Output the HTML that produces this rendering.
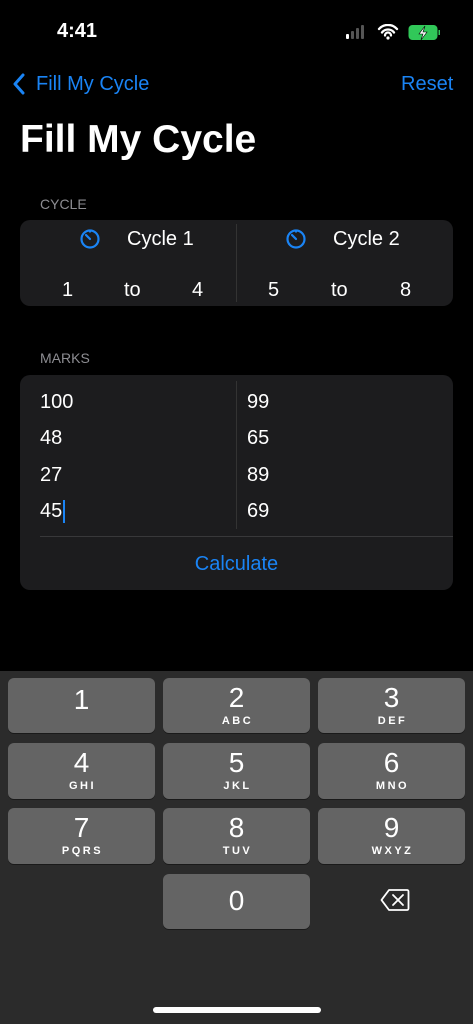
<!DOCTYPE html>
<html><head><meta charset="utf-8"><style>
*{margin:0;padding:0;box-sizing:border-box}
body{width:473px;height:1024px;background:#000;font-family:"Liberation Sans",sans-serif;color:#fff;position:relative;overflow:hidden}
.a{position:absolute;white-space:nowrap}
.blue{color:#1a84f5}
.card{position:absolute;left:20px;width:433px;background:#1c1c1e;border-radius:10px}
.t{font-size:20px;line-height:20px;transform:translateY(-50%)}
.key{position:absolute;width:147px;background:#646464;border-radius:6px;text-align:center;box-shadow:0 1px 0 #1a1a1a}
.key .n{font-size:28px;line-height:28px;display:block;margin-top:6px}
.key .l{font-size:11px;font-weight:bold;letter-spacing:2.5px;display:block;margin-top:3px;padding-left:2px}
.lab{font-size:14px;color:#8d8d92}
</style></head><body>
<div class="a" style="left:57px;top:20px;font-size:20px;font-weight:bold">4:41</div>
<svg class="a" style="left:345px;top:24px" width="95" height="18" viewBox="0 0 95 18">
<rect x="1" y="10" width="3" height="5" rx="1" fill="#fff"/><rect x="6" y="7" width="3" height="8" rx="1" fill="#555"/><rect x="11" y="4" width="3" height="11" rx="1" fill="#555"/><rect x="16" y="1" width="3" height="14" rx="1" fill="#555"/>
<path d="M34 5a12 12 0 0 1 18 0M37 8.5a7.5 7.5 0 0 1 12 0M40 11.5a3 3 0 0 1 6 0" stroke="#fff" stroke-width="2.3" fill="none" stroke-linecap="round"/><circle cx="43" cy="14" r="1.6" fill="#fff"/>
<rect x="64" y="1.5" width="28" height="14" rx="3.5" fill="#31c859" stroke="#31c859"/><rect x="93.5" y="6" width="1.5" height="5" fill="#31c859"/>
<path d="M80 2l-6 8h4l-2 6 6-8h-4z" fill="#fff" stroke="#000" stroke-width=".6"/>
</svg>
<svg class="a" style="left:12px;top:73px" width="14" height="22" viewBox="0 0 14 22"><path d="M11 2L3 11l8 9" stroke="#1a84f5" stroke-width="3" fill="none" stroke-linecap="round" stroke-linejoin="round"/></svg>
<div class="a blue" style="left:36px;top:73px;font-size:20px">Fill My Cycle</div>
<div class="a blue" style="left:401px;top:73px;font-size:20px">Reset</div>
<div class="a" style="left:20px;top:118px;font-size:39px;font-weight:bold">Fill My Cycle</div>
<div class="a lab" style="left:40px;top:196px">CYCLE</div>
<div class="card" style="top:220px;height:86px">
<div class="a" style="left:216px;top:4px;width:1px;height:78px;background:#333"></div>
</div>
<svg class="a" style="left:79px;top:227px" width="22" height="22" viewBox="0 0 22 22"><circle cx="11" cy="12" r="8.5" stroke="#1a84f5" stroke-width="2.2" fill="none"/><path d="M11 12L7 8" stroke="#1a84f5" stroke-width="2.2" stroke-linecap="round"/><path d="M11 3.5v2" stroke="#1a84f5" stroke-width="2"/></svg>
<svg class="a" style="left:285px;top:227px" width="22" height="22" viewBox="0 0 22 22"><circle cx="11" cy="12" r="8.5" stroke="#1a84f5" stroke-width="2.2" fill="none"/><path d="M11 12L7 8" stroke="#1a84f5" stroke-width="2.2" stroke-linecap="round"/><path d="M11 3.5v2" stroke="#1a84f5" stroke-width="2"/></svg>
<div class="a t" style="left:127px;top:239px">Cycle 1</div>
<div class="a t" style="left:333px;top:239px">Cycle 2</div>
<div class="a t" style="left:62px;top:290px">1</div>
<div class="a t" style="left:124px;top:290px">to</div>
<div class="a t" style="left:192px;top:290px">4</div>
<div class="a t" style="left:268px;top:290px">5</div>
<div class="a t" style="left:331px;top:290px">to</div>
<div class="a t" style="left:400px;top:290px">8</div>
<div class="a lab" style="left:40px;top:350px">MARKS</div>
<div class="card" style="top:375px;height:215px">
<div class="a" style="left:216px;top:6px;width:1px;height:148px;background:#333"></div>
<div class="a" style="left:20px;top:161px;width:413px;height:1px;background:#38383a"></div>
</div>
<div class="a t" style="left:40px;top:402px">100</div>
<div class="a t" style="left:40px;top:438px">48</div>
<div class="a t" style="left:40px;top:475px">27</div>
<div class="a t" style="left:40px;top:511px">45</div>
<div class="a" style="left:63px;top:500px;width:2px;height:23px;background:#1a84f5"></div>
<div class="a t" style="left:247px;top:402px">99</div>
<div class="a t" style="left:247px;top:438px">65</div>
<div class="a t" style="left:247px;top:475px">89</div>
<div class="a t" style="left:247px;top:511px">69</div>
<div class="a t blue" style="left:0;width:473px;text-align:center;top:564px">Calculate</div>
<div class="a" style="left:0;top:671px;width:473px;height:353px;background:#2b2b2b"></div>
<div class="key" style="left:8px;top:678px;height:55px"><span class="n" style="margin-top:8px">1</span></div>
<div class="key" style="left:163px;top:678px;height:55px"><span class="n">2</span><span class="l">ABC</span></div>
<div class="key" style="left:318px;top:678px;height:55px"><span class="n">3</span><span class="l">DEF</span></div>
<div class="key" style="left:8px;top:743px;height:56px"><span class="n">4</span><span class="l">GHI</span></div>
<div class="key" style="left:163px;top:743px;height:56px"><span class="n">5</span><span class="l">JKL</span></div>
<div class="key" style="left:318px;top:743px;height:56px"><span class="n">6</span><span class="l">MNO</span></div>
<div class="key" style="left:8px;top:808px;height:56px"><span class="n">7</span><span class="l">PQRS</span></div>
<div class="key" style="left:163px;top:808px;height:56px"><span class="n">8</span><span class="l">TUV</span></div>
<div class="key" style="left:318px;top:808px;height:56px"><span class="n">9</span><span class="l">WXYZ</span></div>
<div class="key" style="left:163px;top:874px;height:55px"><span class="n" style="margin-top:13px">0</span></div>
<svg class="a" style="left:380px;top:888px" width="30" height="24" viewBox="0 0 30 24"><path d="M9 2h18a1.5 1.5 0 0 1 1.5 1.5v17A1.5 1.5 0 0 1 27 22H9L1.5 12z" stroke="#fff" stroke-width="1.8" fill="none" stroke-linejoin="round"/><path d="M13 7l10 10M23 7L13 17" stroke="#fff" stroke-width="1.8" stroke-linecap="round"/></svg>
<div class="a" style="left:153px;top:1007px;width:168px;height:6px;border-radius:3px;background:#fff"></div>
</body></html>
